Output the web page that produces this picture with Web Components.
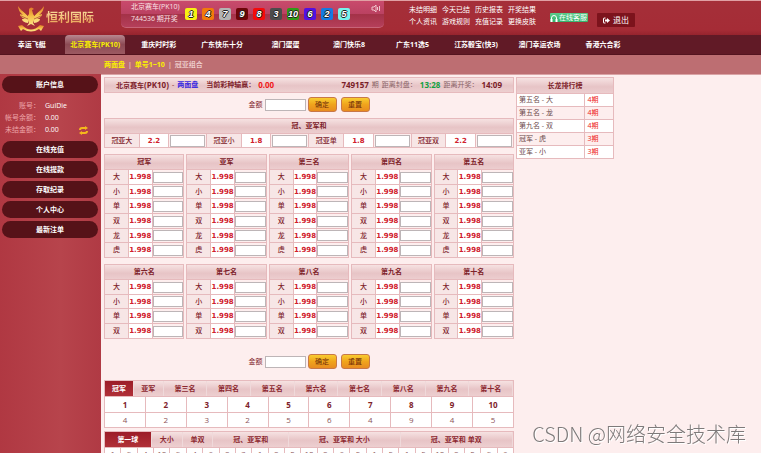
<!DOCTYPE html>
<html lang="zh-CN">
<head>
<meta charset="utf-8">
<title>恒利国际</title>
<style>
html, body {height: 100%;}
body {
  margin: 0;
  overflow: hidden;
  background: #fdeeee;
  color: #7e222a;
  font: 7px/12px "Open Sans", "Noto Sans CJK SC", sans-serif;
  --line: #e6babd;
  --bar: linear-gradient(#f6e2e2, #e7c4c6 55%, #edcfd0);
}
</style>
</head>
<body>
<lottery-page>
  <site-header slot="header"></site-header>
  <game-nav slot="header"></game-nav>
  <account-panel slot="side"></account-panel>
  <game-status></game-status>
  <bet-amount></bet-amount>
  <sum-odds></sum-odds>
  <odds-group names="冠军,亚军,第三名,第四名,第五名" bets="大,小,单,双,龙,虎"></odds-group>
  <odds-group names="第六名,第七名,第八名,第九名,第十名" bets="大,小,单,双"></odds-group>
  <bet-amount class="second"></bet-amount>
  <count-table></count-table>
  <trend-table></trend-table>
  <streak-list slot="aside"></streak-list>
  <page-mark slot="mark">CSDN @网络安全技术库</page-mark>
</lottery-page>

<script>
const reset = `
  :host, * {box-sizing: border-box;}
  :host {display: block;}
  a {color: inherit; text-decoration: none;}
  button, input {font: inherit; margin: 0; border-radius: 0;}
  button {cursor: pointer;}
  table {width: 100%; border-collapse: collapse; table-layout: fixed;}
  th, td {padding: 0; border: 1px solid var(--line); text-align: center;}
`;

// Shared by everything that takes a stake.
const stake = `
  input {
    display: block; width: 100%; height: 12px; padding: 0 2px;
    border: 1px solid #bdb5b7; background: #fff;
  }
`;

const odds = `
  .odds {background: #fff; color: #d0202c; font: bold 7px/12px "DejaVu Sans", sans-serif;}
`;

class Base extends HTMLElement {
  connectedCallback() {
    if (this.shadowRoot) return;
    const root = this.attachShadow({mode: "open"});
    root.innerHTML = `<style>${reset}${this.css()}</style>${this.html()}`;
  }
}

class LotteryPage extends Base {
  css() {
    return `
      :host {min-height: 100%; display: flex; flex-direction: column;}
      .body {flex: 1; display: grid; grid-template-columns: 101px minmax(0, 1fr);}
      .side {background: linear-gradient(90deg, #b03842, #b7444c 60%, #b03a44);}
      .content {
        display: grid; grid-template-columns: 410fr 98fr 145fr; gap: 2px;
        align-items: start; padding: 2px 0 0 3px;
        border-top: 1px solid #d9a3a5; background: #fdeeee;
      }
    `;
  }
  html() {
    return `
      <slot name="header"></slot>
      <div class="body">
        <aside class="side"><slot name="side"></slot></aside>
        <div class="content">
          <main><slot></slot></main>
          <slot name="aside"></slot>
        </div>
      </div>
      <slot name="mark"></slot>
    `;
  }
}

class SiteHeader extends Base {
  css() {
    return `
      :host {
        display: flex; height: 35px; color: #fff;
        border-top: 1px solid #e0a0a4;
        background: linear-gradient(#a52f39, #a52c36 85%, #96242e);
      }
      .logo {display: flex; align-items: center; width: 121px; padding-left: 17px; gap: 1px;}
      .logo svg {width: 28px; height: 27px;}
      .logo b {
        font-size: 12px; line-height: 16px;
        background: linear-gradient(#fbe0a0, #e89a4c); background-clip: text; color: transparent;
      }
      .links {
        display: grid; grid-template-columns: repeat(4, 28px); gap: 0 5px;
        align-content: start; padding-top: 3px; margin-left: 25px; white-space: nowrap;
      }
      .service {
        display: flex; align-items: center; gap: 1px; height: 9px;
        margin: 12px 0 0 14px; padding: 0; width: 38px;
        border: 0; border-radius: 1px; color: #fff; white-space: nowrap;
        background: linear-gradient(#5cc98a, #35b36b); line-height: 9px;
      }
      .service svg {flex: none; width: 8px; height: 8px;}
      .exit {
        display: flex; align-items: center; justify-content: center; gap: 3px;
        width: 38px; height: 14px; margin: 12px 0 0 9px; padding: 0;
        border: 0; border-radius: 1px; background: #7c131c; color: #fff; font-size: 8px; line-height: 12px;
      }
      .exit svg {width: 7px; height: 7px;}
    `;
  }
  html() {
    const links = ["未结明细", "今天已结", "历史报表", "开奖结果", "个人资讯", "游戏规则", "充值记录", "更换皮肤"];
    return `
      <a class="logo" href="#">
        <svg viewBox="0 0 28 27" aria-hidden="true">
          <defs><linearGradient id="g" x2="0" y2="1"><stop stop-color="#e07a28"/><stop offset=".5" stop-color="#f6c04a"/><stop offset="1" stop-color="#fbe68a"/></linearGradient></defs>
          <g fill="url(#g)">
            <path d="M1 1Q4 6 8 8L12 12 11 18Q5 17 5 14L8 14Q3 12 3 9L6 10Q1 6 1 1Z"/>
            <path d="M27 1Q24 6 20 8L16 12 17 18Q23 17 23 14L20 14Q25 12 25 9L22 10Q27 6 27 1Z"/>
            <path d="M12 4Q14 1 17 4L15 5 16 9 18 12 16 18 18 21 14 19 10 21 12 18 10 12 12 9Z"/>
            <path d="M1 21L5 20Q14 29 23 20L27 21 24 26 22 24Q14 29 6 24L4 26Z"/>
          </g>
          <path d="M4 4L11 11M4 11L11 14M24 4L17 11M24 11L17 14" stroke="#a5442c" stroke-width=".7"/>
        </svg>
        <b>恒利国际</b>
      </a>
      <draw-result></draw-result>
      <nav class="links">${links.map(l => `<a href="#">${l}</a>`).join("")}</nav>
      <button class="service">
        <svg viewBox="0 0 8 8" fill="none" stroke="#fff" aria-hidden="true"><path d="M1.500 6V4A2.500 2.500 0 0 1 6.500 4V6"/><path d="M1.500 5V8M6.500 5V8" stroke-width="2"/></svg>
        在线客服
      </button>
      <button class="exit">
        <svg viewBox="0 0 14 14" fill="#fff" aria-hidden="true"><path d="M5 1H3Q0 1 0 4V10Q0 13 3 13H5V11H3Q2 11 2 10V4Q2 3 3 3H5Z"/><path d="M4 5H8V2L14 7 8 12V9H4Z"/></svg>
        退出
      </button>
    `;
  }
}

class DrawResult extends Base {
  css() {
    return `
      :host {
        display: flex; align-items: start; width: 263px; height: 27px; padding: 0 3px 0 10px;
        border-radius: 0 0 5px 5px; border-bottom: 1px solid #c86478;
        background: linear-gradient(#c94a6c, #bb4262 48%, #a43248 52%, #b53f5a);
      }
      p {width: 54px; margin: 0; white-space: nowrap; color: #fbe3e6;}
      ol {display: grid; grid-template-columns: repeat(10, 12px); gap: 5px; margin: 7px 0 0; padding: 0; list-style: none;}
      li {
        height: 12px; border-radius: 2px; text-align: center;
        font: italic bold 9px/12px "Liberation Sans", sans-serif; color: #fff;
        text-shadow: 1px 0 #222, -1px 0 #222, 0 1px #222, 0 -1px #222;
      }
      button {width: 10px; height: 10px; margin: 2px 0 0 auto; padding: 0; border: 0; background: none;}
      svg {display: block;}
    `;
  }
  html() {
    const balls = [
      [1, "#f7f312"], [4, "#f27a0a"], [7, "#b4b4b4"], [9, "#6c0508"], [8, "#f50a0a"],
      [3, "#4c4c4c"], [10, "#2f9a16"], [6, "#5210e2"], [2, "#147ae2"], [5, "#76f4ee"],
    ];
    return `
      <p>北京赛车(PK10)<br>744536 期开奖</p>
      <ol>${balls.map(([n, c]) => `<li style="background:${c}">${n}</li>`).join("")}</ol>
      <button aria-label="声音">
        <svg viewBox="0 0 10 10" fill="none" stroke="#f0c4cc" aria-hidden="true"><path d="M1 4H3L5 2V9L3 7H1ZM6.500 4V7M8.500 3V8"/></svg>
      </button>
    `;
  }
}

class GameNav extends Base {
  css() {
    return `
      .games {background: #611a26; border-bottom: 1px solid #54141f;}
      .games nav {display: grid; grid-template-columns: repeat(10, 1fr); width: 83.4%; height: 19px;}
      .games a {
        display: flex; align-items: center; justify-content: center;
        font-weight: bold; color: #fff; white-space: nowrap;
      }
      .games a.on {
        margin: 0 2px; border-radius: 4px 4px 0 0; color: #f8f000;
        background: linear-gradient(#b88890, #8c4a54 50%, #9c5a62);
      }
      .kinds {display: flex; align-items: center; gap: 3px; height: 19px; padding-left: 104px; background: #bd6e72; color: #fbe6e6;}
      .kinds a.on {color: #faf000; font-weight: bold;}
    `;
  }
  html() {
    const games = ["幸运飞艇", "北京赛车(PK10)", "重庆时时彩", "广东快乐十分", "澳门蛋蛋", "澳门快乐8", "广东11选5", "江苏骰宝(快3)", "澳门幸运农场", "香港六合彩"];
    return `
      <div class="games"><nav>${games.map((g, i) => `<a href="#"${i === 1 ? ' class="on"' : ""}>${g}</a>`).join("")}</nav></div>
      <nav class="kinds">
        <a class="on" href="#">两面盘</a><span>|</span>
        <a class="on" href="#">单号1~10</a><span>|</span>
        <a href="#">冠亚组合</a>
      </nav>
    `;
  }
}

class AccountPanel extends Base {
  css() {
    return `
      :host {padding: 2px 3px 0 2px;}
      h2, a {
        display: block; height: 17px; margin: 0 0 3px; border-radius: 9px;
        background: #561218; color: #fff; font-size: 7px; font-weight: bold;
        line-height: 17px; text-align: center;
      }
      dl {
        display: grid; grid-template-columns: 38px 1fr 9px; column-gap: 5px;
        margin: 7px 10px 5px 0; color: #fff;
      }
      dt {grid-column: 1; justify-self: end; color: #eda4a8; white-space: nowrap;}
      dd {grid-column: 2; margin: 0;}
      button {grid-area: 3 / 3; height: 12px; padding: 0; border: 0; background: none;}
      svg {display: block; width: 9px; height: 12px;}
    `;
  }
  html() {
    return `
      <h2>账户信息</h2>
      <dl>
        <dt>账号：</dt><dd>GuiDie</dd>
        <dt>帐号余额：</dt><dd>0.00</dd>
        <dt>未结金额：</dt><dd>0.00</dd>
        <button aria-label="刷新"><svg viewBox="0 0 9 12" fill="#f5b81c" aria-hidden="true"><path d="M0 6Q0 3 3 3H6V2L9 4 6 6V5H3Q2 5 2 6ZM9 7Q9 10 6 10H3V11L0 9 3 7V8H6Q7 8 7 7Z"/></svg></button>
      </dl>
      ${["在线充值", "在线提款", "存取纪录", "个人中心", "最新注单"].map(t => `<a href="#">${t}</a>`).join("")}
    `;
  }
}

class GameStatus extends Base {
  css() {
    return `
      :host {
        display: flex; align-items: center; gap: 8px; height: 16px; padding: 0 11px;
        border: 1px solid var(--line); background: var(--bar); white-space: nowrap;
      }
      div {display: flex; align-items: center; gap: 3px;}
      b {font-size: 8px;}
      .kind {color: #3a28e0;}
      .lost {color: #f01818;}
      .issue {margin-left: auto; color: #8a6468;}
      .issue b {color: #7a2028;}
      .issue .close {color: #12a040;}
    `;
  }
  html() {
    return `
      <div><span><strong>北京赛车</strong><b>(PK10)</b></span> <span>-</span> <strong class="kind">两面盘</strong></div>
      <div><strong>当前彩种输赢：</strong><b class="lost">0.00</b></div>
      <div class="issue"><b>749157</b><span>期</span><span>距离封盘：</span><b class="close">13:28</b><span>距离开奖：</span><b>14:09</b></div>
    `;
  }
}

class BetAmount extends Base {
  css() {
    return `
      ${stake}
      :host {padding: 4px 0 6px;}
      :host(.second) {padding: 9px 0 11px;}
      form {display: flex; justify-content: center; align-items: center; gap: 2px;}
      input {width: 41px;}
      button {
        width: 29px; height: 15px; padding: 0; border: 1px solid #c87848; border-radius: 3px;
        background: linear-gradient(#f8cc30, #f0a41c 50%, #e88c20); color: #6c2a08; line-height: 12px;
      }
      button + button {margin-left: 2px;}
    `;
  }
  html() {
    return `
      <form onsubmit="return false">
        <label for="amount">金额</label><input id="amount">
        <button>确定</button><button type="reset">重置</button>
      </form>
    `;
  }
}

class SumOdds extends Base {
  css() {
    return `
      ${stake}${odds}
      :host {margin-bottom: 6px;}
      thead tr {height: 15px; background: var(--bar);}
      tbody tr {height: 14px;}
      tbody th {background: #f7e6e6; font-weight: 500;}
      td {padding: 0 1px;}
    `;
  }
  html() {
    const bets = [["冠亚大", "2.2"], ["冠亚小", "1.8"], ["冠亚单", "1.8"], ["冠亚双", "2.2"]];
    return `
      <table>
        <colgroup>${bets.map(_ => `<col style="width:8.5%"><col style="width:7.2%"><col style="width:9.3%">`).join("")}</colgroup>
        <thead><tr><th colspan="12">冠、亚军和</th></tr></thead>
        <tbody><tr>${bets.map(([n, o]) => `<th>${n}</th><td class="odds">${o}</td><td><input aria-label="${n}"></td>`).join("")}</tr></tbody>
      </table>
    `;
  }
}

class OddsGroup extends Base {
  css() {
    return `
      ${stake}${odds}
      :host {display: grid; grid-template-columns: repeat(5, 1fr); gap: 2px; margin-bottom: 6px;}
      thead tr {height: 15px; background: var(--bar);}
      thead th {font-weight: bold;}
      tbody tr {height: 15px;}
      tbody tr:nth-child(3n + 2) {height: 14px;}
      tbody th {background: #f7e6e6; font-weight: 500;}
      input {height: 11px;}
    `;
  }
  html() {
    const names = this.getAttribute("names").split(",");
    const bets = this.getAttribute("bets").split(",");
    return names.map(name => `
      <table>
        <colgroup><col style="width:30%"><col style="width:30%"><col style="width:40%"></colgroup>
        <thead><tr><th colspan="3">${name}</th></tr></thead>
        <tbody>${bets.map(b => `<tr><th>${b}</th><td class="odds">1.998</td><td><input aria-label="${name} ${b}"></td></tr>`).join("")}</tbody>
      </table>
    `).join("");
  }
}

const tabs = `
  .tabs {display: grid; height: 16px; border: 1px solid var(--line); border-bottom: 0; background: var(--bar);}
  .tabs button {
    padding: 0; border: 0; border-right: 1px solid #efd9da; background: none;
    color: #8c2830; font-weight: bold; line-height: 12px; white-space: nowrap;
  }
  .tabs button.on {background: linear-gradient(#9c1c28, #b03038); color: #fff;}
  td, tbody th {background: #fff;}
`;

const tabButtons = names => names.map((n, i) => `<button${i ? "" : ' class="on"'}>${n}</button>`).join("");

class CountTable extends Base {
  css() {
    return `
      ${tabs}
      :host {margin-bottom: 3px;}
      .tabs {grid-template-columns: 29fr 30fr repeat(8, 44fr);}
      tr {height: 16px;}
      tr + tr {height: 15px;}
      th, td {font-size: 8px;}
      td {color: #8c5458;}
    `;
  }
  html() {
    const counts = [4, 2, 3, 2, 5, 6, 4, 9, 4, 5];
    return `
      <div class="tabs">${tabButtons(["冠军", "亚军", "第三名", "第四名", "第五名", "第六名", "第七名", "第八名", "第九名", "第十名"])}</div>
      <table><tbody>
        <tr>${counts.map((_, i) => `<th>${i + 1}</th>`).join("")}</tr>
        <tr>${counts.map(c => `<td>${c}</td>`).join("")}</tr>
      </tbody></table>
    `;
  }
}

class TrendTable extends Base {
  css() {
    return `
      ${tabs}
      .tabs {grid-template-columns: 47fr 31fr 31fr 76fr 112fr 113fr;}
      tr {height: 13px;}
      td {font-size: 8px; color: #8c5458;}
    `;
  }
  html() {
    const balls = [1, 9, 4, 10, 9, 4, 6, 8, 3, 1, 8, 2, 10, 8, 6, 5, 1, 5, 1, 5, 10, 8, 2, 9, 6];
    return `
      <div class="tabs">${tabButtons(["第一球", "大小", "单双", "冠、亚军和", "冠、亚军和 大小", "冠、亚军和 单双"])}</div>
      <table><tbody><tr>${balls.map(b => `<td>${b}</td>`).join("")}</tr></tbody></table>
    `;
  }
}

class StreakList extends Base {
  css() {
    return `
      thead tr {height: 16px; background: var(--bar);}
      tbody tr {height: 13px; background: #fff;}
      tbody tr:nth-child(even) {background: #fdeeee;}
      td:first-child {padding-left: 2px; text-align: left; color: #6c4a4c;}
      td:last-child {padding-right: 12px; color: #ee2222;}
    `;
  }
  html() {
    const rows = [["第五名 - 大", 4], ["第五名 - 龙", 4], ["第九名 - 双", 4], ["冠军 - 虎", 3], ["亚军 - 小", 3]];
    return `
      <table>
        <colgroup><col style="width:70%"><col></colgroup>
        <thead><tr><th colspan="2">长龙排行榜</th></tr></thead>
        <tbody>${rows.map(([n, c]) => `<tr><td>${n}</td><td>${c}期</td></tr>`).join("")}</tbody>
      </table>
    `;
  }
}

class PageMark extends Base {
  css() {
    return `
      :host {
        position: fixed; right: 15px; bottom: 6px; pointer-events: none; white-space: nowrap;
        font: 300 20px/26px "Noto Sans CJK SC", sans-serif; color: #7e7a7a;
        text-shadow: 1px 1px #fff;
      }
    `;
  }
  html() { return `<slot></slot>`; }
}

customElements.define("lottery-page", LotteryPage);
customElements.define("site-header", SiteHeader);
customElements.define("draw-result", DrawResult);
customElements.define("game-nav", GameNav);
customElements.define("account-panel", AccountPanel);
customElements.define("game-status", GameStatus);
customElements.define("bet-amount", BetAmount);
customElements.define("sum-odds", SumOdds);
customElements.define("odds-group", OddsGroup);
customElements.define("count-table", CountTable);
customElements.define("trend-table", TrendTable);
customElements.define("streak-list", StreakList);
customElements.define("page-mark", PageMark);
</script>
</body>
</html>
